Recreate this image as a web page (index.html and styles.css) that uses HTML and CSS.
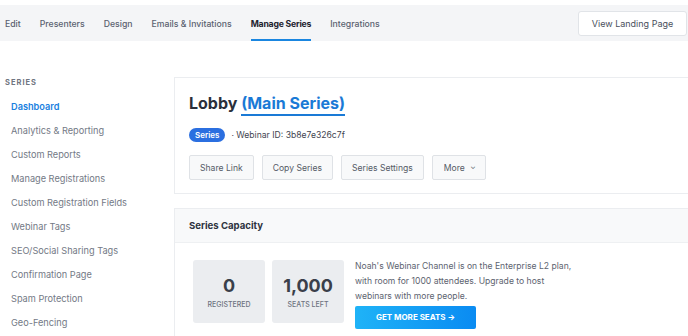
FILE: index.html
```html
<!DOCTYPE html>
<html lang="en">
<head>
    <meta charset="UTF-8">
    <title>Lobby - Manage Series</title>
    <link rel="stylesheet" href="styles.css">
</head>
<body>
    <!-- Top tabs -->
    <div class="topbar">
        <nav class="tabs">
            <a class="tab">Edit</a>
            <a class="tab">Presenters</a>
            <a class="tab">Design</a>
            <a class="tab">Emails &amp; Invitations</a>
            <a class="tab active">Manage Series</a>
            <a class="tab">Integrations</a>
        </nav>
        <button class="landing-button">View Landing Page</button>
    </div>

    <div class="layout">
        <!-- Sidebar -->
        <aside class="sidebar">
            <div class="sidebar-title">Series</div>
            <a class="side-link active">Dashboard</a>
            <a class="side-link">Analytics &amp; Reporting</a>
            <a class="side-link">Custom Reports</a>
            <a class="side-link">Manage Registrations</a>
            <a class="side-link">Custom Registration Fields</a>
            <a class="side-link">Webinar Tags</a>
            <a class="side-link">SEO/Social Sharing Tags</a>
            <a class="side-link">Confirmation Page</a>
            <a class="side-link">Spam Protection</a>
            <a class="side-link">Geo-Fencing</a>
        </aside>

        <main class="main">
            <div class="card summary-card">
                <h1 class="page-title">Lobby <a class="series-link">(Main Series)</a></h1>
                <div class="meta">
                    <span class="badge">Series</span>
                    <span class="webinar-id">· Webinar ID: 3b8e7e326c7f</span>
                </div>
                <div class="actions">
                    <button class="action-button">Share Link</button>
                    <button class="action-button">Copy Series</button>
                    <button class="action-button">Series Settings</button>
                    <button class="action-button more">More <span class="caret">&#8964;</span></button>
                </div>
            </div>

            <div class="card capacity-card">
                <div class="card-header">Series Capacity</div>
                <div class="card-body">
                    <div class="stat">
                        <div class="stat-value">0</div>
                        <div class="stat-label">Registered</div>
                    </div>
                    <div class="stat">
                        <div class="stat-value">1,000</div>
                        <div class="stat-label">Seats Left</div>
                    </div>
                    <div class="upgrade">
                        <p>Noah's Webinar Channel is on the Enterprise L2 plan, with room for 1000 attendees. Upgrade to host webinars with more people.</p>
                        <button class="seats-button">Get More Seats &rarr;</button>
                    </div>
                </div>
            </div>
        </main>
    </div>
</body>
</html>
```

FILE: styles.css
```css
body {
    font-family: Inter, "Noto Sans", sans-serif;
    margin: 0;
    background-color: #fff;
    color: #2b303b;
    overflow: hidden;
}
a {
    text-decoration: none;
    cursor: pointer;
}
button {
    font-family: inherit;
    cursor: pointer;
}

/* Top tabs */
.topbar {
    margin-top: 5px;
    height: 36px;
    background-color: #f4f5f7;
    display: flex;
    align-items: center;
    justify-content: space-between;
    padding-left: 5px;
}
.tabs {
    display: flex;
    gap: 19px;
    height: 100%;
}
.tab {
    font-size: 8.7px;
    font-weight: 500;
    color: #5b6270;
    display: flex;
    align-items: center;
    border-bottom: 2px solid transparent;
    padding-top: 3px;
}
.tab.active {
    color: #1f2430;
    font-weight: 700;
    letter-spacing: -0.2px;
    border-bottom-color: #1a86e0;
}
.landing-button {
    height: 25px;
    width: 109px;
    margin-right: 1px;
    background-color: #fff;
    border: 1px solid #e1e4e8;
    border-radius: 3px;
    font-size: 9px;
    color: #4a505c;
}

.layout {
    display: flex;
}

/* Sidebar */
.sidebar {
    width: 174px;
    flex-shrink: 0;
    padding-top: 36px;
    display: flex;
    flex-direction: column;
}
.sidebar-title {
    font-size: 7.5px;
    font-weight: 700;
    letter-spacing: 1px;
    text-transform: uppercase;
    color: #6f7580;
    padding-left: 5px;
    height: 12px;
    line-height: 12px;
    margin-bottom: 6px;
}
.side-link {
    font-size: 9.2px;
    color: #737985;
    padding-left: 11px;
    height: 24px;
    line-height: 24px;
}
.side-link.active {
    color: #1a7fe0;
    font-weight: 600;
}

/* Main */
.main {
    flex: 1;
    min-width: 540px;
    padding-top: 36px;
}
.card {
    border: 1px solid #ebedf0;
    border-right: none;
    background-color: #fff;
    margin-bottom: 14px;
}
.summary-card {
    padding: 13px 14px 13px;
}
.page-title {
    margin: 0;
    font-size: 16px;
    font-weight: 700;
    line-height: 24px;
    color: #2a2f3b;
}
.series-link {
    color: #1a7ad6;
    border-bottom: 2px solid #1a7ad6;
    padding-bottom: 1px;
}
.meta {
    display: flex;
    align-items: center;
    gap: 6px;
    margin-top: 13px;
}
.badge {
    background-color: #2b6fe0;
    color: #fff;
    font-size: 8px;
    font-weight: 600;
    height: 14px;
    line-height: 14px;
    padding: 0 6px;
    border-radius: 8px;
}
.webinar-id {
    font-size: 8.6px;
    color: #3f4450;
}
.actions {
    display: flex;
    gap: 8px;
    margin-top: 13px;
}
.action-button {
    height: 25px;
    padding: 0 10px;
    background-color: #f8f9fa;
    border: 1px solid #dfe2e6;
    border-radius: 2px;
    font-size: 8.6px;
    color: #555b66;
}
.action-button.more {
    padding: 0 9px 0 11px;
}
.caret {
    font-size: 7px;
    margin-left: 3px;
    position: relative;
    top: -2px;
}

.card-header {
    background-color: #f8f9fa;
    border-bottom: 1px solid #eef0f2;
    height: 33px;
    line-height: 33px;
    padding-left: 14px;
    font-size: 9.6px;
    font-weight: 700;
    color: #2d3340;
}
.card-body {
    display: flex;
    align-items: flex-start;
    padding: 17px 18px 12px;
    gap: 7px;
}
.stat {
    width: 72px;
    height: 63px;
    background-color: #ebedf0;
    border-radius: 3px;
    display: flex;
    flex-direction: column;
    align-items: center;
    justify-content: center;
}
.stat-value {
    font-size: 18px;
    font-weight: 700;
    color: #3a3f4a;
    line-height: 22px;
}
.stat-label {
    font-size: 7px;
    font-weight: 500;
    text-transform: uppercase;
    color: #6d7380;
    margin-top: 3px;
}
.upgrade {
    margin-left: 4px;
    width: 225px;
}
.upgrade p {
    margin: 0;
    font-size: 8.6px;
    line-height: 15px;
    color: #5d636f;
    margin-top: -1px;
}
.seats-button {
    margin-top: 0;
    width: 121px;
    height: 23px;
    border: none;
    border-radius: 2px;
    background: linear-gradient(90deg, #1fb3f7, #0a8bf2);
    color: #fff;
    font-size: 8px;
    font-weight: 700;
    text-transform: uppercase;
}
```
